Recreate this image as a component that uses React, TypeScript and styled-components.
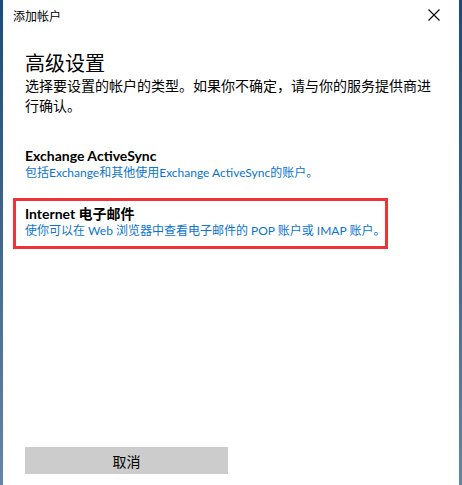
import styled, { createGlobalStyle } from 'styled-components'

const GlobalStyle = createGlobalStyle`
  html, body {
    margin: 0;
    padding: 0;
    background: #ffffff;
  }
`

const Window = styled.div`
  box-sizing: border-box;
  width: 462px;
  height: 485px;
  display: flex;
  flex-direction: column;
  background: #ffffff;
  border-left: 3px solid #33475a;
  border-right: 3px solid;
  border-image: linear-gradient(#1d4b78, #6486a6) 1;
  border-top: 0;
  border-bottom: 0;
  font-family: Lato, "Noto Sans CJK SC", sans-serif;
  color: #000000;
`

const TitleBar = styled.div`
  height: 30px;
  display: flex;
  align-items: center;
  justify-content: space-between;
  padding: 0 17px 0 10px;
  font-size: 12px;
`

const CloseButton = styled.button`
  width: 16px;
  height: 16px;
  padding: 0;
  border: 0;
  background: none;
  display: flex;
  align-items: center;
  justify-content: center;
`

const Content = styled.div`
  flex: 1;
  display: flex;
  flex-direction: column;
  padding: 20px 22px 11px 22px;
`

const Heading = styled.h1`
  margin: 0;
  font-size: 20px;
  font-weight: 400;
  line-height: 26px;
`

const Intro = styled.p`
  margin: 0;
  font-size: 14px;
  line-height: 20px;
`

const AccountList = styled.div`
  display: flex;
  flex-direction: column;
  gap: 24px;
  margin-top: 31px;
`

const Account = styled.div<{ marked?: boolean }>`
  position: relative;

  &::after {
    content: '';
    display: ${props => (props.marked ? 'block' : 'none')};
    position: absolute;
    left: -12px;
    top: -7px;
    width: 375px;
    height: 51px;
    box-sizing: border-box;
    border: 3px solid #ee3436;
  }
`

const AccountName = styled.div`
  font-size: 14px;
  font-weight: 700;
  line-height: 18px;
`

const AccountInfo = styled.div`
  font-size: 12px;
  line-height: 16px;
  color: #0a74d0;
`

const CancelButton = styled.button`
  margin-top: auto;
  width: 203px;
  height: 27px;
  border: 0;
  background: #cccccc;
  font-family: inherit;
  font-size: 14px;
  color: #000000;
`

export default function App() {
  return (
    <>
      <GlobalStyle />
      <Window>
        <TitleBar>
          <span>添加帐户</span>
          <CloseButton>
            <svg width="12" height="12" viewBox="0 0 12 12">
              <path d="M0.5 0.5 L11.5 11.5 M11.5 0.5 L0.5 11.5" stroke="#000" strokeWidth="1.1" />
            </svg>
          </CloseButton>
        </TitleBar>
        <Content>
          <Heading>高级设置</Heading>
          <Intro>选择要设置的帐户的类型。如果你不确定，请与你的服务提供商进行确认。</Intro>
          <AccountList>
            <Account>
              <AccountName>Exchange ActiveSync</AccountName>
              <AccountInfo>包括Exchange和其他使用Exchange ActiveSync的账户。</AccountInfo>
            </Account>
            <Account marked>
              <AccountName>Internet 电子邮件</AccountName>
              <AccountInfo>使你可以在 Web 浏览器中查看电子邮件的 POP 账户或 IMAP 账户。</AccountInfo>
            </Account>
          </AccountList>
          <CancelButton>取消</CancelButton>
        </Content>
      </Window>
    </>
  )
}
